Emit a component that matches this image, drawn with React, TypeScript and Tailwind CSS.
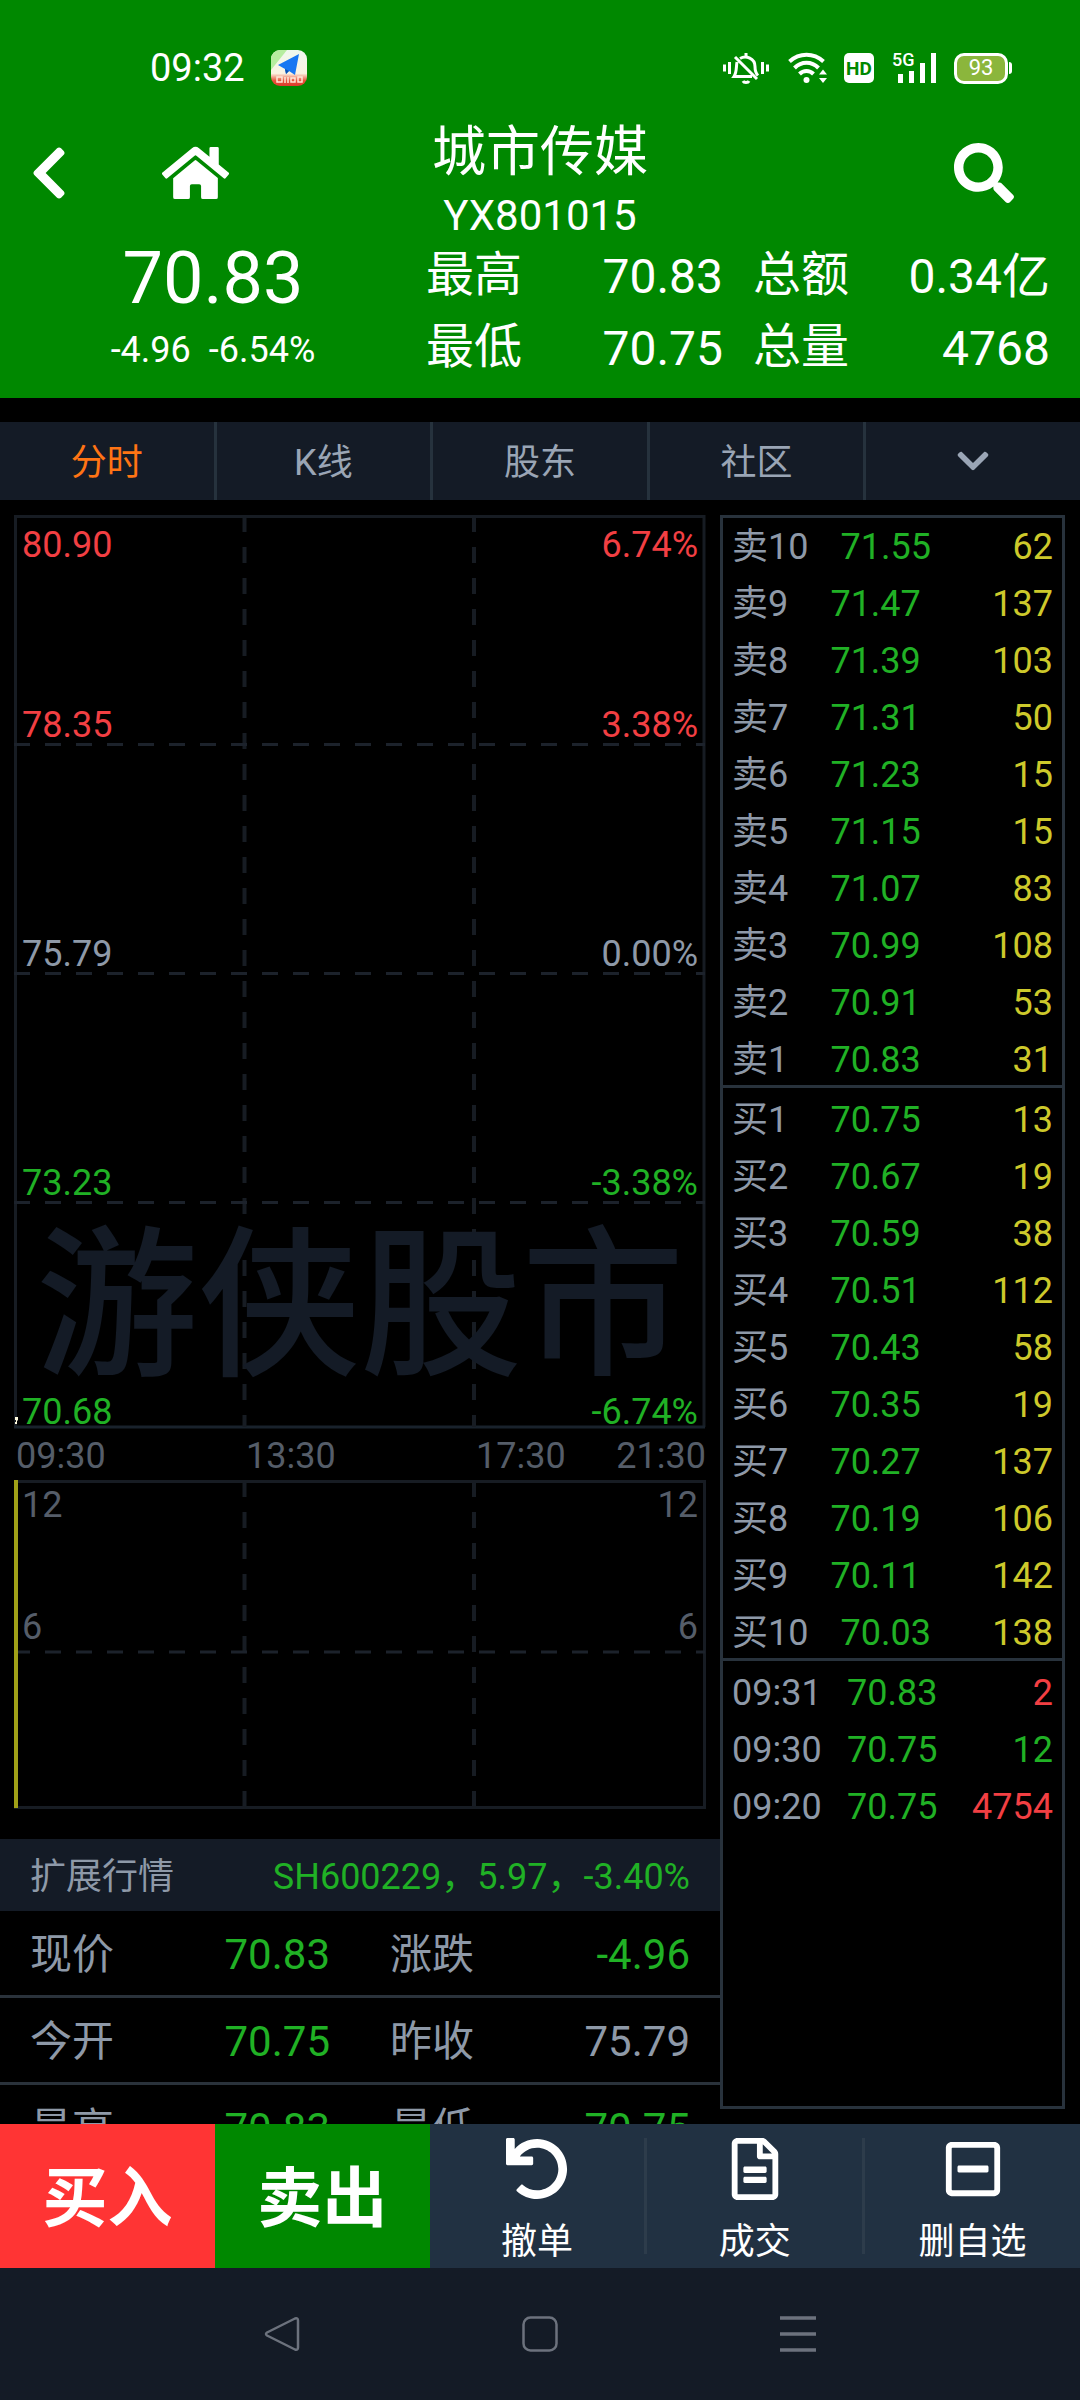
import React from "react";
import {
  FaChevronDown,
  FaChevronLeft,
  FaHome,
  FaRegFileAlt,
  FaRegMinusSquare,
  FaSearch,
  FaUndo,
} from "react-icons/fa";

type Row = [label: string, price: string, amount: string];

const sells: Row[] = [
  ["卖10", "71.55", "62"],
  ["卖9", "71.47", "137"],
  ["卖8", "71.39", "103"],
  ["卖7", "71.31", "50"],
  ["卖6", "71.23", "15"],
  ["卖5", "71.15", "15"],
  ["卖4", "71.07", "83"],
  ["卖3", "70.99", "108"],
  ["卖2", "70.91", "53"],
  ["卖1", "70.83", "31"],
];

const buys: Row[] = [
  ["买1", "70.75", "13"],
  ["买2", "70.67", "19"],
  ["买3", "70.59", "38"],
  ["买4", "70.51", "112"],
  ["买5", "70.43", "58"],
  ["买6", "70.35", "19"],
  ["买7", "70.27", "137"],
  ["买8", "70.19", "106"],
  ["买9", "70.11", "142"],
  ["买10", "70.03", "138"],
];

const trades: [string, string, string, string][] = [
  ["09:31", "70.83", "2", "text-[#f23f43]"],
  ["09:30", "70.75", "12", "text-[#20b125]"],
  ["09:20", "70.75", "4754", "text-[#f23f43]"],
];

function StatusBar() {
  return (
    <div className="flex h-[136px] items-center justify-between pl-[150px] pr-[68px]">
      <div className="flex items-center gap-[26px]">
        <span className="text-[38px] leading-[48px]">09:32</span>
        <svg viewBox="0 0 36 36" className="size-9" aria-hidden="true">
          <defs>
            <clipPath id="app-clip">
              <rect width="36" height="36" rx="9" />
            </clipPath>
            <linearGradient id="app-bg" x1="0" x2="0" y1="0" y2="1">
              <stop offset="0" stopColor="#eef8ee" />
              <stop offset="0.65" stopColor="#fbf3e2" />
              <stop offset="0.85" stopColor="#e8543c" />
              <stop offset="1" stopColor="#dd3a2c" />
            </linearGradient>
          </defs>
          <g clipPath="url(#app-clip)">
            <rect width="36" height="36" fill="url(#app-bg)" />
            <path d="M0 0h16L0 20z" fill="#b6eda0" />
            <path d="M28 4L7 15l7 4 1 5 3-3 6 4z" fill="#1877f2" />
            <path d="M14 19l1 5 3-3z" fill="#0b4fae" />
            <path
              d="M6 27h5v5H6zM14 27v6M17 27v6M20 28h4v4h-4zM27 27h4v5h-4z"
              fill="none"
              stroke="#ffe6d8"
              strokeWidth="1.5"
            />
          </g>
        </svg>
      </div>
      <div className="flex items-center">
        <svg viewBox="0 0 46 32" className="mr-[19px] h-8 w-[46px]" fill="none" stroke="#fff" strokeWidth="3" aria-hidden="true">
          <path d="M1.500 12.500v7M6.500 10v12M39.500 10v12M44.500 12.500v7" />
          <path d="M23 1v4M17 6.500c6-3.500 15 0 15 8 0 5 1 7 3 9" />
          <path d="M14 10c-1 5 0 10-3 14.500h18M12 5l22 22" />
          <path d="M20 29c1 2 5 2 6 0" />
        </svg>
        <svg viewBox="0 0 40 32" className="mr-4 h-8 w-10" fill="none" stroke="#fff" aria-hidden="true">
          <path d="M1.500 9.500c10-9 24-9 34 0" strokeWidth="4" />
          <path d="M6.500 16c7-7 17-7 24 0" strokeWidth="4" />
          <path d="M11.500 22c4-4 10-4 14 0" strokeWidth="4" />
          <circle cx="18.500" cy="28" r="3" fill="#fff" stroke="none" />
          <path d="M31 22.500l4-5 4 5zM31 26l4 5 4-5z" fill="#fff" stroke="none" />
        </svg>
        <span className="mr-[18px] flex h-[30px] w-[30px] items-center justify-center rounded-[5px] bg-white text-[19px] font-bold leading-none text-[#008800]">
          HD
        </span>
        <div className="relative mr-[18px] h-[30px] w-[44px]">
          <span className="absolute left-0 top-0 text-[18px] font-medium leading-[14px]">5G</span>
          <svg viewBox="0 0 44 30" className="size-full" fill="#fff" aria-hidden="true">
            <rect x="6" y="21" width="5" height="9" />
            <rect x="17" y="18" width="5" height="12" />
            <rect x="28" y="10" width="5" height="20" />
            <rect x="39" y="0" width="5" height="30" />
          </svg>
        </div>
        <span className="flex h-[31px] w-[54px] items-center justify-center rounded-[10px] border-[3px] border-white bg-[#8bb63c] text-[22px] leading-none">
          93
        </span>
        <span className="ml-px h-3 w-[3px] rounded-r bg-white" />
      </div>
    </div>
  );
}

function HeaderStat({ label, value }: { label: string; value: string }) {
  return (
    <div className="flex justify-between text-[48px] leading-[72px]">
      <dt className="-mt-[2px]">{label}</dt>
      <dd>{value}</dd>
    </div>
  );
}

function Header() {
  return (
    <header className="h-[398px] shrink-0 bg-[#008800] text-white">
      <StatusBar />
      <div className="flex h-[105px] justify-between pl-[30px] pr-[66px]">
        <div className="flex flex-1 items-center gap-[94px] pb-[32px]">
          <button type="button" aria-label="返回">
            <FaChevronLeft className="h-[60px] w-[38px]" />
          </button>
          <button type="button" aria-label="首页">
            <FaHome className="h-[60px] w-[67px]" />
          </button>
        </div>
        <div className="-mt-[14px] ml-9 text-center">
          <h1 className="text-[54px] leading-[62px]">城市传媒</h1>
          <p className="text-[42px] leading-[64px]">YX801015</p>
        </div>
        <div className="flex flex-1 items-center justify-end pb-[32px]">
          <button type="button" aria-label="搜索">
            <FaSearch className="size-[60px]" />
          </button>
        </div>
      </div>
      <div className="flex">
        <div className="w-[426px] text-center">
          <p className="text-[72px] leading-[76px]">70.83</p>
          <p className="flex justify-center gap-[18px] text-[36px] leading-[66px]">
            <span>-4.96</span>
            <span>-6.54%</span>
          </p>
        </div>
        <dl className="grid flex-1 grid-cols-2 gap-x-[30px] pr-[30px]">
          <HeaderStat label="最高" value="70.83" />
          <HeaderStat label="总额" value="0.34亿" />
          <HeaderStat label="最低" value="70.75" />
          <HeaderStat label="总量" value="4768" />
        </dl>
      </div>
    </header>
  );
}

function Tabs() {
  const tab = "flex flex-1 items-center justify-center border-r-[3px] border-[#26323d] pt-1";
  return (
    <nav className="mt-6 flex h-[78px] shrink-0 bg-[#141b26] text-[36px] text-[#9aa5b5]">
      <button type="button" className={`${tab} text-[#ff7414]`}>分时</button>
      <button type="button" className={tab}>K线</button>
      <button type="button" className={tab}>股东</button>
      <button type="button" className={tab}>社区</button>
      <button type="button" aria-label="更多" className="flex flex-1 items-center justify-center">
        <FaChevronDown className="size-9" />
      </button>
    </nav>
  );
}

function PriceChart() {
  const steps = [
    ["78.35", "3.38%", "text-[#f23f43]"],
    ["75.79", "0.00%", "text-[#8e99a8]"],
    ["73.23", "-3.38%", "text-[#20b125]"],
    ["70.68", "-6.74%", "text-[#20b125]"],
  ];
  return (
    <section className="relative text-[36px] leading-[38px]">
      <svg
        viewBox="0 0 692 916"
        preserveAspectRatio="none"
        className="absolute inset-0 size-full"
        fill="none"
        stroke="#171c23"
        strokeWidth="3"
        aria-hidden="true"
      >
        <path d="M1.500 912V1.500H690V912" />
        <path d="M0 912H691" stroke="#19222c" />
        <path d="M230.500 1V912M460 1V912" strokeWidth="4" strokeDasharray="16 15" />
        <path d="M0 229.500H691M0 458.500H691M0 687.500H691" stroke="#1c222b" strokeDasharray="16 15" />
      </svg>
      <div className="absolute inset-x-0 bottom-[38px] text-center text-[162px] font-medium leading-[170px] text-[#141b26]">
        游侠股市
      </div>
      <svg viewBox="0 0 5 9" className="absolute bottom-[6px] left-0 h-[9px] w-[5px]" aria-hidden="true">
        <path d="M1 1h3v3l-1 1v3H1V6h1V4H1z" fill="#fffbe0" />
      </svg>
      <div className="relative">
        {steps.map(([price, pct, color], i) => (
          <div key={price} className={`flex h-[229px] flex-col px-2 ${i === 0 ? "justify-between pt-[11px]" : "justify-end"} ${color}`}>
            {i === 0 && (
              <div className="flex justify-between">
                <span>80.90</span>
                <span>6.74%</span>
              </div>
            )}
            <div className="flex justify-between">
              <span>{price}</span>
              <span>{pct}</span>
            </div>
          </div>
        ))}
      </div>
    </section>
  );
}

function VolumeChart() {
  return (
    <section className="relative flex h-[329px] flex-col px-2 pt-[6px] text-[36px] leading-[38px] text-[#555d69]">
      <svg
        viewBox="0 0 692 329"
        preserveAspectRatio="none"
        className="absolute inset-0 size-full"
        fill="none"
        stroke="#171c23"
        strokeWidth="3"
        aria-hidden="true"
      >
        <path d="M1.500 1.500H690.500V327.500H1.500z" />
        <path d="M230.500 1V327M460 1V327" strokeWidth="4" strokeDasharray="16 15" />
        <path d="M0 172H691" stroke="#1c222b" strokeDasharray="16 15" />
        <path d="M2 0V328" stroke="#a0a018" strokeWidth="4" />
      </svg>
      <div className="relative flex justify-between">
        <span>12</span>
        <span>12</span>
      </div>
      <div className="relative mt-[84px] flex justify-between">
        <span>6</span>
        <span>6</span>
      </div>
    </section>
  );
}

function Detail({ label, value, color }: { label: string; value: string; color: string }) {
  return (
    <div className="flex justify-between">
      <dt>{label}</dt>
      <dd className={color}>{value}</dd>
    </div>
  );
}

function Details() {
  const row = "grid grid-cols-2 gap-[60px] border-b-[3px] border-[#2a323b] px-[30px] pt-1";
  const green = "text-[#20b125]";
  return (
    <section className="mt-[30px] text-[#8e99a8]">
      <div className="flex items-center justify-between bg-[#141b26] px-[30px] pt-1 text-[36px] leading-[68px]">
        <h2>扩展行情</h2>
        <span className={green}>SH600229，5.97，-3.40%</span>
      </div>
      <dl className="text-[42px] leading-[80px]">
        <div className={row}>
          <Detail label="现价" value="70.83" color={green} />
          <Detail label="涨跌" value="-4.96" color={green} />
        </div>
        <div className={row}>
          <Detail label="今开" value="70.75" color={green} />
          <Detail label="昨收" value="75.79" color="text-[#8e99a8]" />
        </div>
        <div className={row}>
          <Detail label="最高" value="70.83" color={green} />
          <Detail label="最低" value="70.75" color={green} />
        </div>
      </dl>
    </section>
  );
}

function BookRow({ row, amountColor }: { row: Row; amountColor: string }) {
  return (
    <tr className="flex pt-[5px] pb-[3px] last:pb-0">
      <th scope="row" className="font-normal text-[#8e99a8]">{row[0]}</th>
      <td className="flex-1 text-center text-[#20b125]">{row[1]}</td>
      <td className={`w-[90px] text-right ${amountColor}`}>{row[2]}</td>
    </tr>
  );
}

function OrderBook() {
  return (
    <table className="mb-[15px] flex w-[345px] shrink-0 flex-col border-[3px] border-[#28323c] text-[36px] leading-[49px]">
      <tbody className="block border-b-[3px] border-[#28323c] px-[9px]">
        {sells.map((r) => (
          <BookRow key={r[0]} row={r} amountColor="text-[#cdc92b]" />
        ))}
      </tbody>
      <tbody className="block border-b-[3px] border-[#28323c] px-[9px] pt-[3px]">
        {buys.map((r) => (
          <BookRow key={r[0]} row={r} amountColor="text-[#cdc92b]" />
        ))}
      </tbody>
      <tbody className="block px-[9px] pt-[3px]">
        {trades.map(([t, p, a, color]) => (
          <BookRow key={t} row={[t, p, a]} amountColor={color} />
        ))}
      </tbody>
    </table>
  );
}

function ActionBar() {
  const action = "flex flex-1 flex-col items-center pt-[14px] text-[36px] leading-[48px]";
  const order = "flex-1 pt-2 text-[65px] font-bold";
  const divider = "h-[116px] w-[3px] self-center bg-[#2d3c4b]";
  return (
    <div className="flex h-[144px] shrink-0 bg-[#213142] text-white">
      <button type="button" className={`${order} bg-[#ff3434]`}>买入</button>
      <button type="button" className={`${order} bg-[#008800]`}>卖出</button>
      <button type="button" className={action}>
        <FaUndo className="mb-[18px] size-[62px]" />
        撤单
      </button>
      <span className={divider} />
      <button type="button" className={action}>
        <FaRegFileAlt className="mb-[18px] size-[62px]" />
        成交
      </button>
      <span className={divider} />
      <button type="button" className={action}>
        <FaRegMinusSquare className="mb-[18px] size-[62px]" />
        删自选
      </button>
    </div>
  );
}

function SystemNav() {
  const cell = "flex items-center justify-center";
  const icon = "size-9";
  return (
    <div className="grid h-[132px] shrink-0 grid-cols-3 bg-[#141b26] px-[153px] text-[#6c727d]">
      <button type="button" aria-label="系统返回" className={cell}>
        <svg viewBox="0 0 36 36" className={icon} fill="none" stroke="currentColor" strokeWidth="2.500" strokeLinejoin="round" aria-hidden="true">
          <path d="M31 2.500L3 16.500q-2 1.500 0 3L31 33.500q3 1 3-2v-27q0-3-3-2z" />
        </svg>
      </button>
      <button type="button" aria-label="主屏幕" className={cell}>
        <svg viewBox="0 0 36 36" className={icon} fill="none" stroke="currentColor" strokeWidth="2.500" aria-hidden="true">
          <rect x="1.500" y="1.500" width="33" height="33" rx="7" />
        </svg>
      </button>
      <button type="button" aria-label="最近任务" className={cell}>
        <svg viewBox="0 0 36 36" className={icon} fill="none" stroke="currentColor" strokeWidth="3.500" aria-hidden="true">
          <path d="M0 2H36M0 18H36M0 34H36" />
        </svg>
      </button>
    </div>
  );
}

export default function App() {
  return (
    <div className="flex h-screen flex-col overflow-hidden bg-black font-[Roboto,'Noto_Sans_CJK_SC',sans-serif]">
      <Header />
      <Tabs />
      <main className="flex min-h-0 flex-1 pt-[15px] pr-[15px]">
        <div className="min-w-0 flex-1 overflow-hidden">
          <div className="pl-[14px] pr-[14px]">
            <PriceChart />
            <div className="grid h-[49px] grid-cols-3 items-center pl-[2px] text-[36px] leading-10 text-[#555d69]">
              <span>09:30</span>
              <span>13:30</span>
              <span className="flex justify-between">
                <span>17:30</span>
                <span>21:30</span>
              </span>
            </div>
            <VolumeChart />
          </div>
          <Details />
        </div>
        <OrderBook />
      </main>
      <ActionBar />
      <SystemNav />
    </div>
  );
}
